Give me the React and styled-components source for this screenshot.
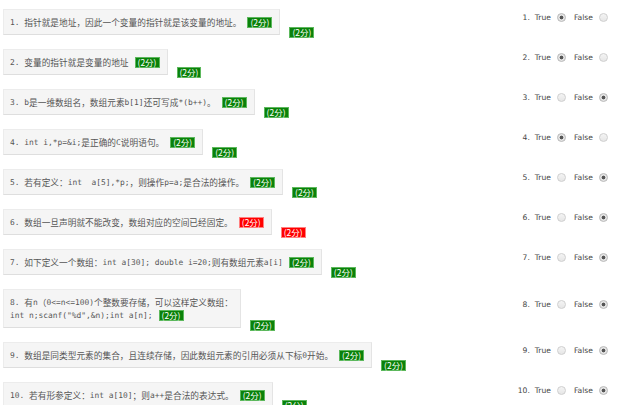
import React from 'react'
import styled, { createGlobalStyle } from 'styled-components'

const GlobalStyle = createGlobalStyle`
  body {
    margin: 0;
    background: #fff;
  }
`

const questions = [
  { lines: ['指针就是地址，因此一个变量的指针就是该变量的地址。'], answer: true },
  { lines: ['变量的指针就是变量的地址'], answer: true },
  { lines: ['b是一维数组名，数组元素b[1]还可写成*(b++)。'], answer: false },
  { lines: ['int i,*p=&i;是正确的C说明语句。'], answer: true },
  { lines: ['若有定义：int  a[5],*p;，则操作p=a;是合法的操作。'], answer: false },
  { lines: ['数组一旦声明就不能改变，数组对应的空间已经固定。'], answer: false, wrong: true },
  { lines: ['如下定义一个数组：int a[30]; double i=20;则有数组元素a[i]'], answer: false },
  {
    lines: ['有n（0<=n<=100)个整数要存储，可以这样定义数组：', 'int n;scanf("%d",&n);int a[n];'],
    answer: false,
  },
  { lines: ['数组是同类型元素的集合，且连续存储，因此数组元素的引用必须从下标0开始。'], answer: false },
  { lines: ['若有形参定义：int a[10]；则a++是合法的表达式。'], answer: false },
]

// split ascii runs out so they get the narrower code font
const Mixed = ({ text }) =>
  text.split(/([\x20-\x7e]+)/).map((part, i) =>
    /^[\x20-\x7e]+$/.test(part) ? <Latin key={i}>{part}</Latin> : <span key={i}>{part}</span>
  )

const App = () => {
  return (
    <Page>
      <GlobalStyle />
      {questions.map((q, i) => (
        <Row key={i}>
          <Left>
            <Box>
              {q.lines.map((line, j) => (
                <Line key={j}>
                  {j === 0 && <Latin>{i + 1}. </Latin>}
                  <Mixed text={line} />
                  {j === q.lines.length - 1 && <Score $wrong={q.wrong}>(2分)</Score>}
                </Line>
              ))}
            </Box>
            <OuterScore $wrong={q.wrong}>(2分)</OuterScore>
          </Left>
          <Answer>
            <Num>{i + 1}.</Num>
            <Label>True</Label>
            <Radio $checked={q.answer} />
            <Label $gap>False</Label>
            <Radio $checked={!q.answer} />
          </Answer>
        </Row>
      ))}
    </Page>
  )
}

export default App

const Page = styled.div`
  padding: 9px 0 0 3px;
  width: 623px;
`

const Row = styled.div`
  display: flex;
  align-items: center;
  margin-bottom: 14px;
`

const Left = styled.div`
  display: flex;
  align-items: flex-end;
`

const Box = styled.div`
  background: #f5f5f5;
  border: 1px solid #ececec;
  border-bottom-color: #dedede;
  border-right-color: #e4e4e4;
  padding: 5.5px 7px 5.5px 6px;
  color: #555;
  font-family: 'Noto Sans CJK SC', sans-serif;
  font-size: 8.7px;
`

const Line = styled.div`
  display: flex;
  align-items: center;
  height: 13px;
  line-height: 13px;
  white-space: pre;
`

const Latin = styled.span`
  font-family: 'DejaVu Sans Mono', monospace;
  font-size: 7.9px;
  white-space: pre;
`

const Score = styled.span`
  display: inline-block;
  margin-left: 6px;
  padding: 0 2px;
  height: 9px;
  line-height: 9px;
  background: ${(p) => (p.$wrong ? '#f00' : '#0a820a')};
  border: 1px solid ${(p) => (p.$wrong ? '#ff8080' : '#5cb85c')};
  color: #fff;
  font-family: 'Noto Sans CJK SC', sans-serif;
  font-size: 8.5px;
`

const OuterScore = styled(Score)`
  margin-left: 9px;
  margin-bottom: -3px;
`

const Answer = styled.div`
  margin-left: auto;
  margin-right: 18px;
  margin-bottom: 9px;
  display: flex;
  align-items: center;
  color: #444;
  font-family: 'DejaVu Sans', sans-serif;
  font-size: 7.6px;
`

const Num = styled.span`
  width: 20px;
  text-align: right;
`

const Label = styled.span`
  margin-left: ${(p) => (p.$gap ? '8px' : '5px')};
  margin-right: 6px;
`

const Radio = styled.span`
  width: 9px;
  height: 9px;
  box-sizing: border-box;
  border-radius: 50%;
  border: 1px solid ${(p) => (p.$checked ? '#b8b8b8' : '#cfcfcf')};
  background: ${(p) =>
    p.$checked
      ? 'radial-gradient(circle, #555 0 1.6px, #e4e4e4 2.2px)'
      : 'linear-gradient(#f4f4f4, #e6e6e6)'};
`
